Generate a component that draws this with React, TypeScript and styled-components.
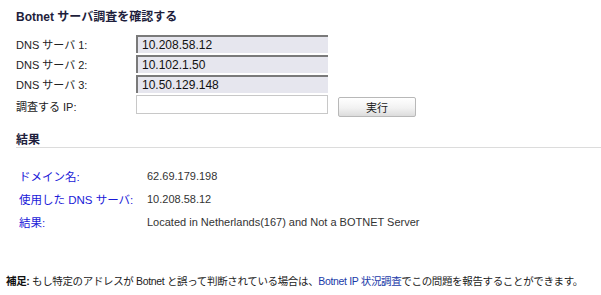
import { Fragment } from 'react';
import styled, { createGlobalStyle } from 'styled-components';

const GlobalStyle = createGlobalStyle`
  html, body {
    margin: 0;
    padding: 0;
    background: #ffffff;
  }
  body {
    font-family: Tahoma, "Liberation Sans", "Noto Sans CJK JP", sans-serif;
    color: #222;
  }
`;

const Page = styled.div`
  width: 601px;
  height: 295px;
  display: flex;
  flex-direction: column;
  overflow: hidden;
`;

const Section = styled.div`
  padding: 0 0 0 16px;
`;

const Title = styled.div`
  font-size: 12px;
  font-weight: bold;
  color: #1e1e3c;
  height: 14px;
  line-height: 14px;
  margin-top: 10px;
`;

const Form = styled.div`
  display: grid;
  grid-template-columns: 120px 192px auto;
  row-gap: 2px;
  margin-top: 11px;
  align-items: center;
`;

const Label = styled.div`
  font-size: 11px;
  color: #222;
`;

const Field = styled.input<{ readOnlyLook?: boolean }>`
  box-sizing: border-box;
  width: 192px;
  height: ${({ readOnlyLook }) => (readOnlyLook ? '18px' : '19px')};
  align-self: start;
  margin: 0;
  padding: 0 0 0 4px;
  font-family: "Liberation Sans", Arial, sans-serif;
  font-size: 12px;
  color: #111;
  background: ${({ readOnlyLook }) => (readOnlyLook ? '#e6e6ee' : '#ffffff')};
  border: ${({ readOnlyLook }) => (readOnlyLook ? 'none' : '1px solid #c8c8c8')};
  border-top: ${({ readOnlyLook }) => (readOnlyLook ? '2px solid #7a7a7a' : '1px solid #c8c8c8')};
  border-left: ${({ readOnlyLook }) => (readOnlyLook ? '2px solid #7a7a7a' : '1px solid #c8c8c8')};
  outline: none;
`;

const Button = styled.button`
  align-self: start;
  margin: 2px 0 0 10px;
  width: 78px;
  height: 20px;
  font-family: "Noto Sans CJK JP", sans-serif;
  font-size: 11px;
  color: #222;
  border: 1px solid #b8b8b8;
  border-radius: 2px;
  background: linear-gradient(#ffffff, #f2f2f2 55%, #dcdcdc);
  padding: 0;
`;

const SectionHead = styled.div`
  margin-top: 17px;
  font-size: 12px;
  font-weight: bold;
  color: #1e1e3c;
  line-height: 12px;
  padding-bottom: 1px;
  border-bottom: 1px solid #dcdcdc;
`;

const Results = styled.div`
  display: grid;
  grid-template-columns: 128px auto;
  grid-auto-rows: 23px;
  align-items: center;
  margin-top: 16px;
  padding-left: 3px;
`;

const ResultLabel = styled.div`
  font-size: 11.5px;
  color: #1a1ad8;
`;

const ResultValue = styled.div`
  font-size: 11px;
  color: #333;
`;

const Footer = styled.div`
  margin-top: 41px;
  padding-left: 6px;
  font-size: 10.5px;
  line-height: 15px;
  color: #222;
  white-space: nowrap;
  letter-spacing: -0.35px;
`;

const Strong = styled.b`
  color: #111;
`;

const Link = styled.a`
  color: #1a3aa8;
  text-decoration: none;
`;

const dnsServers = ['10.208.58.12', '10.102.1.50', '10.50.129.148'];

const results = [
  { label: 'ドメイン名:', value: '62.69.179.198' },
  { label: '使用した DNS サーバ:', value: '10.208.58.12' },
  { label: '結果:', value: 'Located in Netherlands(167) and Not a BOTNET Server' },
];

export default function App() {
  return (
    <Page>
      <GlobalStyle />
      <Section>
        <Title>Botnet サーバ調査を確認する</Title>
        <Form>
          {dnsServers.map((ip, i) => (
            <Fragment key={ip}>
              <Label>DNS サーバ {i + 1}:</Label>
              <Field readOnlyLook readOnly value={ip} />
              <span />
            </Fragment>
          ))}
          <Label>調査する IP:</Label>
          <Field defaultValue="" />
          <Button>実行</Button>
        </Form>
        <SectionHead>結果</SectionHead>
        <Results>
          {results.map((r) => (
            <Fragment key={r.label}>
              <ResultLabel>{r.label}</ResultLabel>
              <ResultValue>{r.value}</ResultValue>
            </Fragment>
          ))}
        </Results>
      </Section>
      <Footer>
        <Strong>補足:</Strong> もし特定のアドレスが Botnet と誤って判断されている場合は、
        <Link href="#">Botnet IP 状況調査</Link>でこの問題を報告することができます。
      </Footer>
    </Page>
  );
}
